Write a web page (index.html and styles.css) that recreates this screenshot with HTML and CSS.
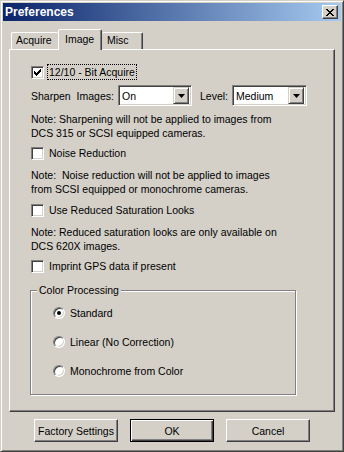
FILE: index.html
```html
<!DOCTYPE html>
<html lang="en">
<head>
<meta charset="UTF-8">
<title>Preferences</title>
<link rel="stylesheet" href="styles.css">
</head>
<body>
<div class="window">
    <div class="titlebar">
        <span class="title">Preferences</span>
        <span class="close-btn">
            <svg width="8" height="7" viewBox="0 0 8 7" shape-rendering="crispEdges">
                <path d="M0,0h2v1h-2zM6,0h2v1h-2zM1,1h2v1h-2zM5,1h2v1h-2zM2,2h4v1h-4zM3,3h2v1h-2zM2,4h4v1h-4zM1,5h2v1h-2zM5,5h2v1h-2zM0,6h2v1h-2zM6,6h2v1h-2z" fill="#000"/>
            </svg>
        </span>
    </div>

    <div class="tabs">
        <div class="tab tab-acquire">Acquire</div>
        <div class="tab selected">Image</div>
        <div class="tab tab-misc">Misc</div>
    </div>

    <div class="panel">
        <div class="check-row">
            <span class="checkbox">
                <svg width="11" height="11" viewBox="0 0 11 11" shape-rendering="crispEdges">
                    <polygon transform="translate(2,2)" fill="#000" points="0,2 1,2 1,3 2,3 2,4 3,4 3,3 4,3 4,2 5,2 5,1 6,1 6,0 7,0 7,3 6,3 6,4 5,4 5,5 4,5 4,6 3,6 3,7 2,7 2,6 1,6 1,5 0,5"/>
                </svg>
            </span>
            <span class="label focus">12/10 - Bit Acquire</span>
        </div>

        <div class="combo-row">
            <span class="combo-label">Sharpen&nbsp; Images:</span>
            <div class="combo combo-sharpen">
                <span class="combo-value">On</span>
                <span class="combo-btn"><svg width="7" height="4" viewBox="0 0 7 4"><polygon points="0,0 7,0 3.5,4" fill="#000"/></svg></span>
            </div>
            <span class="level-label">Level:</span>
            <div class="combo combo-level">
                <span class="combo-value">Medium</span>
                <span class="combo-btn"><svg width="7" height="4" viewBox="0 0 7 4"><polygon points="0,0 7,0 3.5,4" fill="#000"/></svg></span>
            </div>
        </div>

        <p class="note">Note: Sharpening will not be applied to images from<br>DCS 315 or SCSI equipped cameras.</p>

        <div class="check-row after-note">
            <span class="checkbox"></span>
            <span class="label">Noise Reduction</span>
        </div>

        <p class="note after-check">Note:&nbsp; Noise reduction will not be applied to images<br>from SCSI equipped or monochrome cameras.</p>

        <div class="check-row after-note-2">
            <span class="checkbox"></span>
            <span class="label">Use Reduced Saturation Looks</span>
        </div>

        <p class="note after-check">Note: Reduced saturation looks are only available on<br>DCS 620X images.</p>

        <div class="check-row after-note">
            <span class="checkbox"></span>
            <span class="label">Imprint GPS data if present</span>
        </div>

        <fieldset class="group">
            <legend>Color Processing</legend>
            <div class="radios">
                <div class="radio-row">
                    <span class="radio"><span class="dot"></span></span>
                    <span>Standard</span>
                </div>
                <div class="radio-row">
                    <span class="radio"></span>
                    <span>Linear (No Correction)</span>
                </div>
                <div class="radio-row">
                    <span class="radio"></span>
                    <span>Monochrome from Color</span>
                </div>
            </div>
        </fieldset>
    </div>

    <div class="buttons">
        <div class="btn">Factory Settings</div>
        <div class="btn default">OK</div>
        <div class="btn">Cancel</div>
    </div>
</div>
</body>
</html>
```

FILE: styles.css
```css
body {
    margin: 0;
    font-family: "Liberation Sans", Arial, sans-serif;
    font-size: 10.5px;
    color: #000;
    background: #d4d0c8;
}

/* window frame */
.window {
    width: 344px;
    height: 452px;
    box-sizing: border-box;
    background: #d4d0c8;
    border: 1px solid;
    border-color: #d4d0c8 #404040 #404040 #d4d0c8;
    box-shadow: inset 1px 1px #fff, inset -1px -1px #808080;
    padding: 2px;
}

.titlebar {
    height: 18px;
    display: flex;
    align-items: center;
    justify-content: space-between;
    padding: 0 3px 0 2px;
    background: linear-gradient(to right, #0a246a, #a6caf0);
    color: #fff;
    font-weight: bold;
    font-size: 12px;
}

.close-btn {
    width: 16px;
    height: 14px;
    box-sizing: border-box;
    background: #d4d0c8;
    border: 1px solid;
    border-color: #fff #404040 #404040 #fff;
    box-shadow: inset -1px -1px #808080;
    display: flex;
    align-items: center;
    justify-content: center;
}

/* tabs */
.tabs {
    display: flex;
    align-items: flex-end;
    height: 20px;
    margin: 8px 0 0 8px;
}

.tab {
    box-sizing: border-box;
    height: 17px;
    line-height: 15px;
    padding-left: 4px;
    border: 1px solid;
    border-bottom: none;
    border-color: #fff #404040 transparent #fff;
    border-radius: 2px 2px 0 0;
    box-shadow: inset -1px 0 #808080;
}

.tab-acquire {
    width: 47px;
    border-right: none;
    box-shadow: none;
}

.tab.selected {
    width: 44px;
    height: 21px;
    line-height: 18px;
    padding-left: 6px;
    margin-bottom: -1px;
    position: relative;
    z-index: 1;
    background: #d4d0c8;
}

.tab-misc {
    width: 41px;
    border-left: none;
    padding-left: 5px;
}

/* tab page */
.panel {
    margin: 0 6px;
    border: 1px solid;
    border-color: #fff #404040 #404040 #fff;
    box-shadow: inset -1px -1px #808080;
    padding: 14px 20px 16px 21px;
}

.check-row {
    display: flex;
    align-items: center;
    height: 16px;
}

.after-note {
    margin-top: 5px;
}

.after-note-2 {
    margin-top: 6px;
}

.checkbox {
    width: 13px;
    height: 13px;
    box-sizing: border-box;
    background: #fff;
    border: 1px solid;
    border-color: #808080 #fff #fff #808080;
    box-shadow: inset 1px 1px #404040, inset -1px -1px #d4d0c8;
}

.checkbox svg {
    display: block;
}

.label {
    margin-left: 3px;
    padding: 0 1px;
    line-height: 14px;
    border: 1px solid transparent;
}

.label.focus {
    border: 1px dotted #000;
}

.combo-row {
    display: flex;
    align-items: center;
    height: 21px;
    margin-top: 5px;
}

.combo-label {
    width: 87px;
}

.level-label {
    width: 32px;
    margin-left: 8px;
}

.combo {
    box-sizing: border-box;
    height: 21px;
    padding: 2px;
    background: #fff;
    border: 1px solid;
    border-color: #808080 #fff #fff #808080;
    box-shadow: inset 1px 1px #404040, inset -1px -1px #d4d0c8;
    display: flex;
    align-items: center;
    justify-content: space-between;
}

.combo-sharpen {
    width: 74px;
}

.combo-level {
    width: 75px;
}

.combo-value {
    padding-left: 1px;
}

.combo-btn {
    width: 16px;
    height: 17px;
    box-sizing: border-box;
    background: #d4d0c8;
    border: 1px solid;
    border-color: #d4d0c8 #404040 #404040 #d4d0c8;
    box-shadow: inset 1px 1px #fff, inset -1px -1px #808080;
    display: flex;
    align-items: center;
    justify-content: center;
}

.note {
    margin: 6px 0 0;
    line-height: 14px;
}

.note.after-check {
    margin-top: 7px;
}

/* group box */
.group {
    box-sizing: border-box;
    width: 266px;
    margin: 9px 0 0 -1px;
    padding: 0;
    border: 1px solid #808080;
    box-shadow: 1px 1px #fff, inset 1px 1px #fff;
}

.group legend {
    margin-left: 6px;
    padding: 0 2px;
    line-height: 14px;
    background: #d4d0c8;
}

.radios {
    padding: 8px 0 15px 22px;
}

.radio-row {
    display: flex;
    align-items: center;
    height: 16px;
}

.radio-row + .radio-row {
    margin-top: 13px;
}

.radio {
    width: 12px;
    height: 12px;
    box-sizing: border-box;
    margin-right: 5px;
    border-radius: 50%;
    background: #fff;
    border: 1px solid;
    border-color: #808080 #fff #fff #808080;
    box-shadow: inset 1px 1px #404040, inset -1px -1px #d4d0c8;
    display: flex;
    align-items: center;
    justify-content: center;
}

.dot {
    width: 4px;
    height: 4px;
    border-radius: 50%;
    background: #000;
}

/* dialog buttons */
.buttons {
    display: flex;
    gap: 12px;
    margin: 7px 0 0 31px;
}

.btn {
    width: 84px;
    height: 23px;
    box-sizing: border-box;
    border: 1px solid;
    border-color: #fff #404040 #404040 #fff;
    box-shadow: inset -1px -1px #808080;
    display: flex;
    align-items: center;
    justify-content: center;
}

.btn.default {
    border: 1px solid #000;
    box-shadow: inset 1px 1px #fff, inset -1px -1px #404040, inset -2px -2px #808080;
}
```
